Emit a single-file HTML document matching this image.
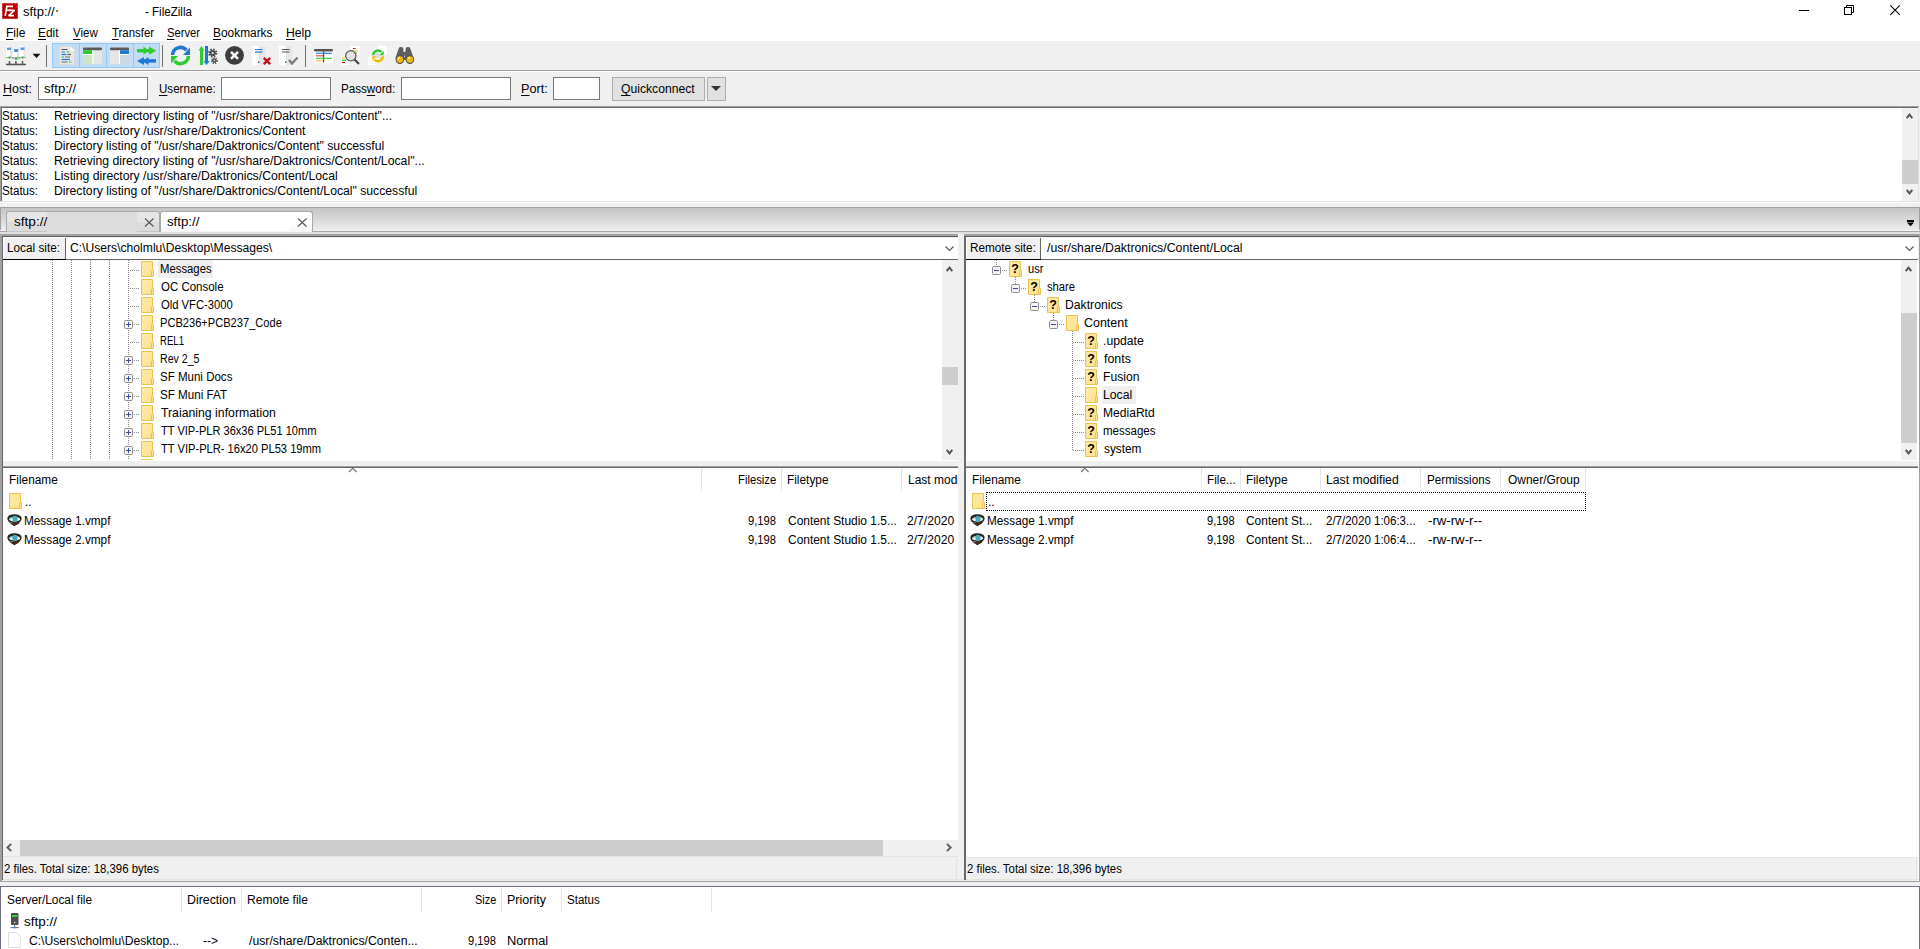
<!DOCTYPE html><html><head><meta charset="utf-8"><style>
*{margin:0;padding:0;box-sizing:border-box}
html,body{width:1920px;height:949px;overflow:hidden;background:#f0f0f0}
body{position:relative;font-family:"Liberation Sans",sans-serif;font-size:12px;color:#000}
.t{position:absolute;white-space:nowrap;line-height:15px;height:15px}
.u{text-decoration:underline;text-underline-offset:2px}
</style></head><body><div style="position:absolute;left:0px;top:0px;width:1920px;height:41px;background:#fff"></div>
<svg style="position:absolute;left:2px;top:3px" width="16" height="16" viewBox="0 0 16 16"><defs><linearGradient id="fzg" x1="0" y1="0" x2="0" y2="1"><stop offset="0" stop-color="#c80000"/><stop offset="1" stop-color="#a80000"/></linearGradient></defs><rect x="0.5" y="0.5" width="15" height="15" fill="url(#fzg)"/><rect x="0.5" y="0.5" width="15" height="15" fill="none" stroke="#b00000" stroke-width="1" stroke-dasharray="0.8 0.7"/><path d="M3.2 12.8L4.9 3.3H11" fill="none" stroke="#fff" stroke-width="1.7"/><path d="M4.2 7.2H8.5" stroke="#fff" stroke-width="1.5"/><path d="M7 7.4H12.6L6.6 12.6H12" fill="none" stroke="#fff" stroke-width="1.6" stroke-linejoin="bevel"/></svg>
<div class="t" style="left:23.10px;top:5px;transform:scaleX(1.0793);transform-origin:0 0;">sftp://</div>
<div style="position:absolute;left:56px;top:10px;width:1.5px;height:1.5px;background:#7a4a20;border-radius:1px"></div>
<div class="t" style="left:144.50px;top:5px;transform:scaleX(0.9633);transform-origin:0 0;">- FileZilla</div>
<div style="position:absolute;left:1799px;top:10px;width:10px;height:1px;background:#000"></div>
<svg style="position:absolute;left:1843px;top:4px" width="13" height="13" viewBox="0 0 13 13"><rect x="1.5" y="3.5" width="7" height="7" fill="none" stroke="#000"/><path d="M3.5 3.5V1.5H10.5V8.5H8.5" fill="none" stroke="#000"/></svg>
<svg style="position:absolute;left:1889px;top:4px" width="13" height="13" viewBox="0 0 13 13"><path d="M1.3 1.3L10.8 10.8M10.8 1.3L1.3 10.8" stroke="#000" stroke-width="1.1"/></svg>
<div class="t" style="left:6.00px;top:26px;transform:scaleX(1.0000);transform-origin:0 0;"><span class="u">F</span>ile</div>
<div class="t" style="left:38.21px;top:26px;transform:scaleX(0.9900);transform-origin:0 0;"><span class="u">E</span>dit</div>
<div class="t" style="left:73.10px;top:26px;transform:scaleX(0.9577);transform-origin:0 0;"><span class="u">V</span>iew</div>
<div class="t" style="left:112.00px;top:26px;transform:scaleX(0.9523);transform-origin:0 0;"><span class="u">T</span>ransfer</div>
<div class="t" style="left:167.26px;top:26px;transform:scaleX(0.9353);transform-origin:0 0;"><span class="u">S</span>erver</div>
<div class="t" style="left:213.01px;top:26px;transform:scaleX(0.9915);transform-origin:0 0;"><span class="u">B</span>ookmarks</div>
<div class="t" style="left:286.38px;top:26px;transform:scaleX(1.0174);transform-origin:0 0;"><span class="u">H</span>elp</div>
<div style="position:absolute;left:0px;top:70px;width:1920px;height:1px;background:#a0a0a0"></div>
<div style="position:absolute;left:0px;top:71px;width:1920px;height:1px;background:#fff"></div>
<div class="t" style="left:3.37px;top:82px;transform:scaleX(1.0346);transform-origin:0 0;"><span class="u">H</span>ost:</div>
<div style="position:absolute;left:38px;top:77px;width:110px;height:23px;background:#fff;border:1px solid #7a7a7a"></div>
<div class="t" style="left:44.40px;top:82px;transform:scaleX(1.0966);transform-origin:0 0;">sftp://</div>
<div class="t" style="left:158.54px;top:82px;transform:scaleX(0.9649);transform-origin:0 0;"><span class="u">U</span>sername:</div>
<div style="position:absolute;left:221px;top:77px;width:110px;height:23px;background:#fff;border:1px solid #7a7a7a"></div>
<div class="t" style="left:341.43px;top:82px;transform:scaleX(0.9685);transform-origin:0 0;">Pass<span class="u">w</span>ord:</div>
<div style="position:absolute;left:401px;top:77px;width:110px;height:23px;background:#fff;border:1px solid #7a7a7a"></div>
<div class="t" style="left:521.24px;top:82px;transform:scaleX(1.0565);transform-origin:0 0;"><span class="u">P</span>ort:</div>
<div style="position:absolute;left:553px;top:77px;width:47px;height:23px;background:#fff;border:1px solid #7a7a7a"></div>
<div style="position:absolute;left:612px;top:77px;width:93px;height:24px;background:#e1e1e1;border:1px solid #adadad"></div>
<div class="t" style="left:621.00px;top:82px;transform:scaleX(1.0137);transform-origin:0 0;"><span class="u">Q</span>uickconnect</div>
<div style="position:absolute;left:707px;top:77px;width:19px;height:24px;background:#e1e1e1;border:1px solid #adadad"></div>
<svg style="position:absolute;left:711px;top:86px" width="10" height="6" viewBox="0 0 10 6"><path d="M0 0H10L5 5Z" fill="#333"/></svg>
<div style="position:absolute;left:0px;top:106px;width:1920px;height:95px;background:#fff;border-top:1px solid #a0a0a0;border-left:1px solid #a0a0a0"></div>
<div style="position:absolute;left:1px;top:201px;width:1918px;height:1px;background:#e3e3e3"></div>
<div style="position:absolute;left:0px;top:202px;width:1920px;height:1px;background:#fff"></div>
<div style="position:absolute;left:1px;top:107px;width:1918px;height:1px;background:#696969"></div>
<div style="position:absolute;left:1px;top:107px;width:1px;height:94px;background:#696969"></div>
<div class="t" style="left:2.33px;top:109px;transform:scaleX(0.9657);transform-origin:0 0;">Status:</div>
<div class="t" style="left:53.68px;top:109px;transform:scaleX(1.0207);transform-origin:0 0;">Retrieving directory listing of &quot;/usr/share/Daktronics/Content&quot;...</div>
<div class="t" style="left:2.33px;top:124px;transform:scaleX(0.9657);transform-origin:0 0;">Status:</div>
<div class="t" style="left:53.68px;top:124px;transform:scaleX(1.0216);transform-origin:0 0;">Listing directory /usr/share/Daktronics/Content</div>
<div class="t" style="left:2.33px;top:139px;transform:scaleX(0.9657);transform-origin:0 0;">Status:</div>
<div class="t" style="left:53.69px;top:139px;transform:scaleX(1.0148);transform-origin:0 0;">Directory listing of &quot;/usr/share/Daktronics/Content&quot; successful</div>
<div class="t" style="left:2.33px;top:154px;transform:scaleX(0.9657);transform-origin:0 0;">Status:</div>
<div class="t" style="left:53.68px;top:154px;transform:scaleX(1.0202);transform-origin:0 0;">Retrieving directory listing of &quot;/usr/share/Daktronics/Content/Local&quot;...</div>
<div class="t" style="left:2.33px;top:169px;transform:scaleX(0.9657);transform-origin:0 0;">Status:</div>
<div class="t" style="left:53.68px;top:169px;transform:scaleX(1.0199);transform-origin:0 0;">Listing directory /usr/share/Daktronics/Content/Local</div>
<div class="t" style="left:2.33px;top:184px;transform:scaleX(0.9657);transform-origin:0 0;">Status:</div>
<div class="t" style="left:53.68px;top:184px;transform:scaleX(1.0163);transform-origin:0 0;">Directory listing of &quot;/usr/share/Daktronics/Content/Local&quot; successful</div>
<div style="position:absolute;left:1902px;top:108px;width:16px;height:93px;background:#f0f0f0"></div>
<div style="position:absolute;left:1902px;top:160px;width:16px;height:24px;background:#cdcdcd"></div>
<svg style="position:absolute;left:1905px;top:112px" width="9" height="8" viewBox="0 0 9 8"><path d="M1.7 6.2L4.5 2.6L7.3 6.2" fill="none" stroke="#555" stroke-width="2"/></svg>
<svg style="position:absolute;left:1905px;top:188px" width="9" height="8" viewBox="0 0 9 8"><path d="M1.7 1.8L4.5 5.4L7.3 1.8" fill="none" stroke="#555" stroke-width="2"/></svg>
<div style="position:absolute;left:1918px;top:107px;width:1px;height:94px;background:#e3e3e3"></div>
<div style="position:absolute;left:1919px;top:106px;width:1px;height:97px;background:#f0f0f0"></div>
<div style="position:absolute;left:0px;top:207px;width:1920px;height:23px;background:linear-gradient(#c4c4c4,#ececec);border-top:1px solid #a0a0a0;border-left:1px solid #a0a0a0;border-right:1px solid #a0a0a0"></div>
<div style="position:absolute;left:0px;top:230px;width:1920px;height:1px;background:#f4f4f4"></div>
<div style="position:absolute;left:0px;top:231px;width:1920px;height:1px;background:#a4a4a4"></div>
<div style="position:absolute;left:6px;top:211px;width:154px;height:20px;background:linear-gradient(#e6e6e6 0,#e6e6e6 50%,#dcdcdc 50%,#dcdcdc);border:1px solid #a8a8a8;border-bottom:none;border-radius:3px 3px 0 0"></div>
<div style="position:absolute;left:7px;top:231px;width:152px;height:1px;background:#c4c4c4"></div>
<div style="position:absolute;left:47px;top:212px;width:90px;height:20px;background:#dcdcdc"></div>
<div class="t" style="left:14.00px;top:215px;transform:scaleX(1.1345);transform-origin:0 0;">sftp://</div>
<svg style="position:absolute;left:144px;top:218px" width="11" height="9" viewBox="0 0 11 9"><path d="M1 0.5L9.5 8.5M9.5 0.5L1 8.5" stroke="#555" stroke-width="1.1"/></svg>
<div style="position:absolute;left:160px;top:211px;width:153px;height:22px;background:linear-gradient(#fff 55%,#f2f2f2);border:1px solid #a8a8a8;border-bottom:none;border-radius:3px 3px 0 0"></div>
<div style="position:absolute;left:199px;top:212px;width:90px;height:19px;background:#fff"></div>
<div class="t" style="left:167.00px;top:215px;transform:scaleX(1.1034);transform-origin:0 0;">sftp://</div>
<svg style="position:absolute;left:297px;top:218px" width="11" height="9" viewBox="0 0 11 9"><path d="M1 0.5L9.5 8.5M9.5 0.5L1 8.5" stroke="#555" stroke-width="1.1"/></svg>
<div style="position:absolute;left:1907px;top:220px;width:7px;height:1.6px;background:#000"></div>
<svg style="position:absolute;left:1907px;top:222px" width="7" height="5" viewBox="0 0 7 5"><path d="M0 0.5H7L3.5 4.3Z" fill="#000"/></svg>
<div style="position:absolute;left:0px;top:232px;width:1920px;height:2px;background:#e0e0e0"></div>
<div style="position:absolute;left:0px;top:234px;width:958px;height:2px;background:#a2a2a2"></div>
<div style="position:absolute;left:1px;top:236px;width:957px;height:1px;background:#5c5c5c"></div>
<div style="position:absolute;left:958px;top:234px;width:6px;height:3px;background:#f0f0f0"></div>
<div style="position:absolute;left:964px;top:234px;width:956px;height:2px;background:#a2a2a2"></div>
<div style="position:absolute;left:964px;top:236px;width:955px;height:1px;background:#5c5c5c"></div>
<div style="position:absolute;left:3px;top:237px;width:63px;height:22px;background:#f0f0f0;border-top:1px solid #fff;border-left:1px solid #fff"></div>
<div style="position:absolute;left:65px;top:238px;width:1px;height:21px;background:#646464"></div>
<div class="t" style="left:7.32px;top:241px;transform:scaleX(0.9827);transform-origin:0 0;">Local site:</div>
<div style="position:absolute;left:66px;top:238px;width:892px;height:21px;background:#fff"></div>
<div class="t" style="left:70.39px;top:241px;transform:scaleX(1.0106);transform-origin:0 0;">C:\Users\cholmlu\Desktop\Messages\</div>
<svg style="position:absolute;left:945px;top:246px" width="9" height="5" viewBox="0 0 9 5"><path d="M0.5 0.5L4.5 4.5L8.5 0.5" fill="none" stroke="#555" stroke-width="1.1"/></svg>
<div style="position:absolute;left:3px;top:259px;width:63px;height:1px;background:#000"></div>
<div style="position:absolute;left:66px;top:259px;width:892px;height:1px;background:#646464"></div>
<div style="position:absolute;left:966px;top:237px;width:75px;height:22px;background:#f0f0f0;border-top:1px solid #fff;border-left:1px solid #fff"></div>
<div style="position:absolute;left:1040px;top:238px;width:1px;height:21px;background:#646464"></div>
<div class="t" style="left:970.42px;top:241px;transform:scaleX(0.9785);transform-origin:0 0;">Remote site:</div>
<div style="position:absolute;left:1041px;top:238px;width:877px;height:21px;background:#fff"></div>
<div class="t" style="left:1047.40px;top:241px;transform:scaleX(1.0253);transform-origin:0 0;">/usr/share/Daktronics/Content/Local</div>
<svg style="position:absolute;left:1905px;top:246px" width="9" height="5" viewBox="0 0 9 5"><path d="M0.5 0.5L4.5 4.5L8.5 0.5" fill="none" stroke="#555" stroke-width="1.1"/></svg>
<div style="position:absolute;left:966px;top:259px;width:75px;height:1px;background:#000"></div>
<div style="position:absolute;left:1041px;top:259px;width:877px;height:1px;background:#646464"></div>
<div style="position:absolute;left:958px;top:237px;width:6px;height:643px;background:#f0f0f0"></div>
<div style="position:absolute;left:1917px;top:260px;width:2px;height:621px;background:#fff"></div>
<div style="position:absolute;left:3px;top:260px;width:955px;height:200px;background:#fff"></div>
<div style="position:absolute;left:52px;top:260px;width:1px;height:200px;background:repeating-linear-gradient(#888 0 1px,transparent 1px 2px)"></div>
<div style="position:absolute;left:71px;top:260px;width:1px;height:200px;background:repeating-linear-gradient(#888 0 1px,transparent 1px 2px)"></div>
<div style="position:absolute;left:90px;top:260px;width:1px;height:200px;background:repeating-linear-gradient(#888 0 1px,transparent 1px 2px)"></div>
<div style="position:absolute;left:109px;top:260px;width:1px;height:200px;background:repeating-linear-gradient(#888 0 1px,transparent 1px 2px)"></div>
<div style="position:absolute;left:128px;top:260px;width:1px;height:200px;background:repeating-linear-gradient(#888 0 1px,transparent 1px 2px)"></div>
<div style="position:absolute;left:130px;top:270px;width:10px;height:1px;background:repeating-linear-gradient(90deg,#888 0 1px,transparent 1px 2px)"></div>
<svg style="position:absolute;left:141px;top:261px" width="13" height="16" viewBox="0 0 13 16"><defs><linearGradient id="fg" x1="0" y1="0" x2="1" y2="1"><stop offset="0" stop-color="#ffeba8"/><stop offset="1" stop-color="#fde08a"/></linearGradient></defs><path d="M0.5 0.5H11.5V9.5H12.5V15.5H0.5Z" fill="url(#fg)" stroke="#e9c24f"/><path d="M10.5 9.8V15.5" stroke="#e9c24f"/></svg>
<div style="position:absolute;left:158px;top:260px;width:55px;height:18px;background:#efefef"></div>
<div class="t" style="left:159.56px;top:262px;transform:scaleX(0.9434);transform-origin:0 0;">Messages</div>
<div style="position:absolute;left:130px;top:288px;width:10px;height:1px;background:repeating-linear-gradient(90deg,#888 0 1px,transparent 1px 2px)"></div>
<svg style="position:absolute;left:141px;top:279px" width="13" height="16" viewBox="0 0 13 16"><defs><linearGradient id="fg" x1="0" y1="0" x2="1" y2="1"><stop offset="0" stop-color="#ffeba8"/><stop offset="1" stop-color="#fde08a"/></linearGradient></defs><path d="M0.5 0.5H11.5V9.5H12.5V15.5H0.5Z" fill="url(#fg)" stroke="#e9c24f"/><path d="M10.5 9.8V15.5" stroke="#e9c24f"/></svg>
<div class="t" style="left:160.50px;top:280px;transform:scaleX(0.9569);transform-origin:0 0;">OC Console</div>
<div style="position:absolute;left:130px;top:306px;width:10px;height:1px;background:repeating-linear-gradient(90deg,#888 0 1px,transparent 1px 2px)"></div>
<svg style="position:absolute;left:141px;top:297px" width="13" height="16" viewBox="0 0 13 16"><defs><linearGradient id="fg" x1="0" y1="0" x2="1" y2="1"><stop offset="0" stop-color="#ffeba8"/><stop offset="1" stop-color="#fde08a"/></linearGradient></defs><path d="M0.5 0.5H11.5V9.5H12.5V15.5H0.5Z" fill="url(#fg)" stroke="#e9c24f"/><path d="M10.5 9.8V15.5" stroke="#e9c24f"/></svg>
<div class="t" style="left:160.50px;top:298px;transform:scaleX(0.9355);transform-origin:0 0;">Old VFC-3000</div>
<div style="position:absolute;left:130px;top:324px;width:10px;height:1px;background:repeating-linear-gradient(90deg,#888 0 1px,transparent 1px 2px)"></div>
<svg style="position:absolute;left:124px;top:320px" width="9" height="9" viewBox="0 0 9 9"><rect x="0.5" y="0.5" width="8" height="8" rx="1" fill="#f4f4f4" stroke="#8f8f8f"/><path d="M2 4.5H7" stroke="#3b4d9a" stroke-width="1"/><path d="M4.5 2V7" stroke="#3b4d9a" stroke-width="1"/></svg>
<svg style="position:absolute;left:141px;top:315px" width="13" height="16" viewBox="0 0 13 16"><defs><linearGradient id="fg" x1="0" y1="0" x2="1" y2="1"><stop offset="0" stop-color="#ffeba8"/><stop offset="1" stop-color="#fde08a"/></linearGradient></defs><path d="M0.5 0.5H11.5V9.5H12.5V15.5H0.5Z" fill="url(#fg)" stroke="#e9c24f"/><path d="M10.5 9.8V15.5" stroke="#e9c24f"/></svg>
<div class="t" style="left:159.58px;top:316px;transform:scaleX(0.9246);transform-origin:0 0;">PCB236+PCB237_Code</div>
<div style="position:absolute;left:130px;top:342px;width:10px;height:1px;background:repeating-linear-gradient(90deg,#888 0 1px,transparent 1px 2px)"></div>
<svg style="position:absolute;left:141px;top:333px" width="13" height="16" viewBox="0 0 13 16"><defs><linearGradient id="fg" x1="0" y1="0" x2="1" y2="1"><stop offset="0" stop-color="#ffeba8"/><stop offset="1" stop-color="#fde08a"/></linearGradient></defs><path d="M0.5 0.5H11.5V9.5H12.5V15.5H0.5Z" fill="url(#fg)" stroke="#e9c24f"/><path d="M10.5 9.8V15.5" stroke="#e9c24f"/></svg>
<div class="t" style="left:159.70px;top:334px;transform:scaleX(0.8000);transform-origin:0 0;">REL1</div>
<div style="position:absolute;left:130px;top:360px;width:10px;height:1px;background:repeating-linear-gradient(90deg,#888 0 1px,transparent 1px 2px)"></div>
<svg style="position:absolute;left:124px;top:356px" width="9" height="9" viewBox="0 0 9 9"><rect x="0.5" y="0.5" width="8" height="8" rx="1" fill="#f4f4f4" stroke="#8f8f8f"/><path d="M2 4.5H7" stroke="#3b4d9a" stroke-width="1"/><path d="M4.5 2V7" stroke="#3b4d9a" stroke-width="1"/></svg>
<svg style="position:absolute;left:141px;top:351px" width="13" height="16" viewBox="0 0 13 16"><defs><linearGradient id="fg" x1="0" y1="0" x2="1" y2="1"><stop offset="0" stop-color="#ffeba8"/><stop offset="1" stop-color="#fde08a"/></linearGradient></defs><path d="M0.5 0.5H11.5V9.5H12.5V15.5H0.5Z" fill="url(#fg)" stroke="#e9c24f"/><path d="M10.5 9.8V15.5" stroke="#e9c24f"/></svg>
<div class="t" style="left:159.62px;top:352px;transform:scaleX(0.8837);transform-origin:0 0;">Rev 2_5</div>
<div style="position:absolute;left:130px;top:378px;width:10px;height:1px;background:repeating-linear-gradient(90deg,#888 0 1px,transparent 1px 2px)"></div>
<svg style="position:absolute;left:124px;top:374px" width="9" height="9" viewBox="0 0 9 9"><rect x="0.5" y="0.5" width="8" height="8" rx="1" fill="#f4f4f4" stroke="#8f8f8f"/><path d="M2 4.5H7" stroke="#3b4d9a" stroke-width="1"/><path d="M4.5 2V7" stroke="#3b4d9a" stroke-width="1"/></svg>
<svg style="position:absolute;left:141px;top:369px" width="13" height="16" viewBox="0 0 13 16"><defs><linearGradient id="fg" x1="0" y1="0" x2="1" y2="1"><stop offset="0" stop-color="#ffeba8"/><stop offset="1" stop-color="#fde08a"/></linearGradient></defs><path d="M0.5 0.5H11.5V9.5H12.5V15.5H0.5Z" fill="url(#fg)" stroke="#e9c24f"/><path d="M10.5 9.8V15.5" stroke="#e9c24f"/></svg>
<div class="t" style="left:159.54px;top:370px;transform:scaleX(0.9608);transform-origin:0 0;">SF Muni Docs</div>
<div style="position:absolute;left:130px;top:396px;width:10px;height:1px;background:repeating-linear-gradient(90deg,#888 0 1px,transparent 1px 2px)"></div>
<svg style="position:absolute;left:124px;top:392px" width="9" height="9" viewBox="0 0 9 9"><rect x="0.5" y="0.5" width="8" height="8" rx="1" fill="#f4f4f4" stroke="#8f8f8f"/><path d="M2 4.5H7" stroke="#3b4d9a" stroke-width="1"/><path d="M4.5 2V7" stroke="#3b4d9a" stroke-width="1"/></svg>
<svg style="position:absolute;left:141px;top:387px" width="13" height="16" viewBox="0 0 13 16"><defs><linearGradient id="fg" x1="0" y1="0" x2="1" y2="1"><stop offset="0" stop-color="#ffeba8"/><stop offset="1" stop-color="#fde08a"/></linearGradient></defs><path d="M0.5 0.5H11.5V9.5H12.5V15.5H0.5Z" fill="url(#fg)" stroke="#e9c24f"/><path d="M10.5 9.8V15.5" stroke="#e9c24f"/></svg>
<div class="t" style="left:159.53px;top:388px;transform:scaleX(0.9706);transform-origin:0 0;">SF Muni FAT</div>
<div style="position:absolute;left:130px;top:414px;width:10px;height:1px;background:repeating-linear-gradient(90deg,#888 0 1px,transparent 1px 2px)"></div>
<svg style="position:absolute;left:124px;top:410px" width="9" height="9" viewBox="0 0 9 9"><rect x="0.5" y="0.5" width="8" height="8" rx="1" fill="#f4f4f4" stroke="#8f8f8f"/><path d="M2 4.5H7" stroke="#3b4d9a" stroke-width="1"/><path d="M4.5 2V7" stroke="#3b4d9a" stroke-width="1"/></svg>
<svg style="position:absolute;left:141px;top:405px" width="13" height="16" viewBox="0 0 13 16"><defs><linearGradient id="fg" x1="0" y1="0" x2="1" y2="1"><stop offset="0" stop-color="#ffeba8"/><stop offset="1" stop-color="#fde08a"/></linearGradient></defs><path d="M0.5 0.5H11.5V9.5H12.5V15.5H0.5Z" fill="url(#fg)" stroke="#e9c24f"/><path d="M10.5 9.8V15.5" stroke="#e9c24f"/></svg>
<div class="t" style="left:160.50px;top:406px;transform:scaleX(1.0223);transform-origin:0 0;">Traianing information</div>
<div style="position:absolute;left:130px;top:432px;width:10px;height:1px;background:repeating-linear-gradient(90deg,#888 0 1px,transparent 1px 2px)"></div>
<svg style="position:absolute;left:124px;top:428px" width="9" height="9" viewBox="0 0 9 9"><rect x="0.5" y="0.5" width="8" height="8" rx="1" fill="#f4f4f4" stroke="#8f8f8f"/><path d="M2 4.5H7" stroke="#3b4d9a" stroke-width="1"/><path d="M4.5 2V7" stroke="#3b4d9a" stroke-width="1"/></svg>
<svg style="position:absolute;left:141px;top:423px" width="13" height="16" viewBox="0 0 13 16"><defs><linearGradient id="fg" x1="0" y1="0" x2="1" y2="1"><stop offset="0" stop-color="#ffeba8"/><stop offset="1" stop-color="#fde08a"/></linearGradient></defs><path d="M0.5 0.5H11.5V9.5H12.5V15.5H0.5Z" fill="url(#fg)" stroke="#e9c24f"/><path d="M10.5 9.8V15.5" stroke="#e9c24f"/></svg>
<div class="t" style="left:160.50px;top:424px;transform:scaleX(0.9220);transform-origin:0 0;">TT VIP-PLR 36x36 PL51 10mm</div>
<div style="position:absolute;left:130px;top:450px;width:10px;height:1px;background:repeating-linear-gradient(90deg,#888 0 1px,transparent 1px 2px)"></div>
<svg style="position:absolute;left:124px;top:446px" width="9" height="9" viewBox="0 0 9 9"><rect x="0.5" y="0.5" width="8" height="8" rx="1" fill="#f4f4f4" stroke="#8f8f8f"/><path d="M2 4.5H7" stroke="#3b4d9a" stroke-width="1"/><path d="M4.5 2V7" stroke="#3b4d9a" stroke-width="1"/></svg>
<svg style="position:absolute;left:141px;top:441px" width="13" height="16" viewBox="0 0 13 16"><defs><linearGradient id="fg" x1="0" y1="0" x2="1" y2="1"><stop offset="0" stop-color="#ffeba8"/><stop offset="1" stop-color="#fde08a"/></linearGradient></defs><path d="M0.5 0.5H11.5V9.5H12.5V15.5H0.5Z" fill="url(#fg)" stroke="#e9c24f"/><path d="M10.5 9.8V15.5" stroke="#e9c24f"/></svg>
<div class="t" style="left:160.50px;top:442px;transform:scaleX(0.9279);transform-origin:0 0;">TT VIP-PLR- 16x20 PL53 19mm</div>
<div style="position:absolute;left:130px;top:468px;width:10px;height:1px;background:repeating-linear-gradient(90deg,#888 0 1px,transparent 1px 2px)"></div>
<svg style="position:absolute;left:124px;top:464px" width="9" height="9" viewBox="0 0 9 9"><rect x="0.5" y="0.5" width="8" height="8" rx="1" fill="#f4f4f4" stroke="#8f8f8f"/><path d="M2 4.5H7" stroke="#3b4d9a" stroke-width="1"/><path d="M4.5 2V7" stroke="#3b4d9a" stroke-width="1"/></svg>
<svg style="position:absolute;left:141px;top:459px" width="13" height="16" viewBox="0 0 13 16"><defs><linearGradient id="fg" x1="0" y1="0" x2="1" y2="1"><stop offset="0" stop-color="#ffeba8"/><stop offset="1" stop-color="#fde08a"/></linearGradient></defs><path d="M0.5 0.5H11.5V9.5H12.5V15.5H0.5Z" fill="url(#fg)" stroke="#e9c24f"/><path d="M10.5 9.8V15.5" stroke="#e9c24f"/></svg>
<div style="position:absolute;left:942px;top:260px;width:16px;height:200px;background:#f0f0f0"></div>
<div style="position:absolute;left:942px;top:367px;width:16px;height:18px;background:#cdcdcd"></div>
<svg style="position:absolute;left:945px;top:265px" width="9" height="8" viewBox="0 0 9 8"><path d="M1.7 6.2L4.5 2.6L7.3 6.2" fill="none" stroke="#555" stroke-width="2"/></svg>
<svg style="position:absolute;left:945px;top:448px" width="9" height="8" viewBox="0 0 9 8"><path d="M1.7 1.8L4.5 5.4L7.3 1.8" fill="none" stroke="#555" stroke-width="2"/></svg>
<div style="position:absolute;left:965px;top:260px;width:953px;height:200px;background:#fff"></div>
<div style="position:absolute;left:1002px;top:270px;width:6px;height:1px;background:repeating-linear-gradient(90deg,#888 0 1px,transparent 1px 2px)"></div>
<div style="position:absolute;left:996px;top:260px;width:1px;height:6px;background:repeating-linear-gradient(#888 0 1px,transparent 1px 2px)"></div>
<svg style="position:absolute;left:992px;top:266px" width="9" height="9" viewBox="0 0 9 9"><rect x="0.5" y="0.5" width="8" height="8" rx="1" fill="#f4f4f4" stroke="#8f8f8f"/><path d="M2 4.5H7" stroke="#3b4d9a" stroke-width="1"/></svg>
<svg style="position:absolute;left:1009px;top:261px" width="13" height="16" viewBox="0 0 13 16"><defs><linearGradient id="fg" x1="0" y1="0" x2="1" y2="1"><stop offset="0" stop-color="#ffeba8"/><stop offset="1" stop-color="#fde08a"/></linearGradient></defs><path d="M0.5 0.5H11.5V9.5H12.5V15.5H0.5Z" fill="url(#fg)" stroke="#e9c24f"/><path d="M10.5 9.8V15.5" stroke="#e9c24f"/><text x="6" y="11.6" text-anchor="middle" font-family="Liberation Sans" font-weight="bold" font-size="12.5" fill="#000">?</text></svg>
<div class="t" style="left:1027.98px;top:262px;transform:scaleX(0.9250);transform-origin:0 0;">usr</div>
<div style="position:absolute;left:1021px;top:288px;width:6px;height:1px;background:repeating-linear-gradient(90deg,#888 0 1px,transparent 1px 2px)"></div>
<div style="position:absolute;left:1015px;top:277px;width:1px;height:7px;background:repeating-linear-gradient(#888 0 1px,transparent 1px 2px)"></div>
<svg style="position:absolute;left:1011px;top:284px" width="9" height="9" viewBox="0 0 9 9"><rect x="0.5" y="0.5" width="8" height="8" rx="1" fill="#f4f4f4" stroke="#8f8f8f"/><path d="M2 4.5H7" stroke="#3b4d9a" stroke-width="1"/></svg>
<svg style="position:absolute;left:1028px;top:279px" width="13" height="16" viewBox="0 0 13 16"><defs><linearGradient id="fg" x1="0" y1="0" x2="1" y2="1"><stop offset="0" stop-color="#ffeba8"/><stop offset="1" stop-color="#fde08a"/></linearGradient></defs><path d="M0.5 0.5H11.5V9.5H12.5V15.5H0.5Z" fill="url(#fg)" stroke="#e9c24f"/><path d="M10.5 9.8V15.5" stroke="#e9c24f"/><text x="6" y="11.6" text-anchor="middle" font-family="Liberation Sans" font-weight="bold" font-size="12.5" fill="#000">?</text></svg>
<div class="t" style="left:1047.00px;top:280px;transform:scaleX(0.9367);transform-origin:0 0;">share</div>
<div style="position:absolute;left:1040px;top:306px;width:6px;height:1px;background:repeating-linear-gradient(90deg,#888 0 1px,transparent 1px 2px)"></div>
<div style="position:absolute;left:1034px;top:295px;width:1px;height:7px;background:repeating-linear-gradient(#888 0 1px,transparent 1px 2px)"></div>
<svg style="position:absolute;left:1030px;top:302px" width="9" height="9" viewBox="0 0 9 9"><rect x="0.5" y="0.5" width="8" height="8" rx="1" fill="#f4f4f4" stroke="#8f8f8f"/><path d="M2 4.5H7" stroke="#3b4d9a" stroke-width="1"/></svg>
<svg style="position:absolute;left:1047px;top:297px" width="13" height="16" viewBox="0 0 13 16"><defs><linearGradient id="fg" x1="0" y1="0" x2="1" y2="1"><stop offset="0" stop-color="#ffeba8"/><stop offset="1" stop-color="#fde08a"/></linearGradient></defs><path d="M0.5 0.5H11.5V9.5H12.5V15.5H0.5Z" fill="url(#fg)" stroke="#e9c24f"/><path d="M10.5 9.8V15.5" stroke="#e9c24f"/><text x="6" y="11.6" text-anchor="middle" font-family="Liberation Sans" font-weight="bold" font-size="12.5" fill="#000">?</text></svg>
<div class="t" style="left:1064.98px;top:298px;transform:scaleX(1.0182);transform-origin:0 0;">Daktronics</div>
<div style="position:absolute;left:1059px;top:324px;width:6px;height:1px;background:repeating-linear-gradient(90deg,#888 0 1px,transparent 1px 2px)"></div>
<div style="position:absolute;left:1053px;top:313px;width:1px;height:7px;background:repeating-linear-gradient(#888 0 1px,transparent 1px 2px)"></div>
<svg style="position:absolute;left:1049px;top:320px" width="9" height="9" viewBox="0 0 9 9"><rect x="0.5" y="0.5" width="8" height="8" rx="1" fill="#f4f4f4" stroke="#8f8f8f"/><path d="M2 4.5H7" stroke="#3b4d9a" stroke-width="1"/></svg>
<svg style="position:absolute;left:1066px;top:315px" width="13" height="16" viewBox="0 0 13 16"><defs><linearGradient id="fg" x1="0" y1="0" x2="1" y2="1"><stop offset="0" stop-color="#ffeba8"/><stop offset="1" stop-color="#fde08a"/></linearGradient></defs><path d="M0.5 0.5H11.5V9.5H12.5V15.5H0.5Z" fill="url(#fg)" stroke="#e9c24f"/><path d="M10.5 9.8V15.5" stroke="#e9c24f"/></svg>
<div class="t" style="left:1083.96px;top:316px;transform:scaleX(1.0390);transform-origin:0 0;">Content</div>
<div style="position:absolute;left:1073px;top:342px;width:11px;height:1px;background:repeating-linear-gradient(90deg,#888 0 1px,transparent 1px 2px)"></div>
<svg style="position:absolute;left:1085px;top:333px" width="13" height="16" viewBox="0 0 13 16"><defs><linearGradient id="fg" x1="0" y1="0" x2="1" y2="1"><stop offset="0" stop-color="#ffeba8"/><stop offset="1" stop-color="#fde08a"/></linearGradient></defs><path d="M0.5 0.5H11.5V9.5H12.5V15.5H0.5Z" fill="url(#fg)" stroke="#e9c24f"/><path d="M10.5 9.8V15.5" stroke="#e9c24f"/><text x="6" y="11.6" text-anchor="middle" font-family="Liberation Sans" font-weight="bold" font-size="12.5" fill="#000">?</text></svg>
<div class="t" style="left:1102.98px;top:334px;transform:scaleX(1.0179);transform-origin:0 0;">.update</div>
<div style="position:absolute;left:1073px;top:360px;width:11px;height:1px;background:repeating-linear-gradient(90deg,#888 0 1px,transparent 1px 2px)"></div>
<svg style="position:absolute;left:1085px;top:351px" width="13" height="16" viewBox="0 0 13 16"><defs><linearGradient id="fg" x1="0" y1="0" x2="1" y2="1"><stop offset="0" stop-color="#ffeba8"/><stop offset="1" stop-color="#fde08a"/></linearGradient></defs><path d="M0.5 0.5H11.5V9.5H12.5V15.5H0.5Z" fill="url(#fg)" stroke="#e9c24f"/><path d="M10.5 9.8V15.5" stroke="#e9c24f"/><text x="6" y="11.6" text-anchor="middle" font-family="Liberation Sans" font-weight="bold" font-size="12.5" fill="#000">?</text></svg>
<div class="t" style="left:1104.00px;top:352px;transform:scaleX(1.0346);transform-origin:0 0;">fonts</div>
<div style="position:absolute;left:1073px;top:378px;width:11px;height:1px;background:repeating-linear-gradient(90deg,#888 0 1px,transparent 1px 2px)"></div>
<svg style="position:absolute;left:1085px;top:369px" width="13" height="16" viewBox="0 0 13 16"><defs><linearGradient id="fg" x1="0" y1="0" x2="1" y2="1"><stop offset="0" stop-color="#ffeba8"/><stop offset="1" stop-color="#fde08a"/></linearGradient></defs><path d="M0.5 0.5H11.5V9.5H12.5V15.5H0.5Z" fill="url(#fg)" stroke="#e9c24f"/><path d="M10.5 9.8V15.5" stroke="#e9c24f"/><text x="6" y="11.6" text-anchor="middle" font-family="Liberation Sans" font-weight="bold" font-size="12.5" fill="#000">?</text></svg>
<div class="t" style="left:1102.99px;top:370px;transform:scaleX(1.0118);transform-origin:0 0;">Fusion</div>
<div style="position:absolute;left:1073px;top:396px;width:11px;height:1px;background:repeating-linear-gradient(90deg,#888 0 1px,transparent 1px 2px)"></div>
<svg style="position:absolute;left:1085px;top:387px" width="13" height="16" viewBox="0 0 13 16"><defs><linearGradient id="fg" x1="0" y1="0" x2="1" y2="1"><stop offset="0" stop-color="#ffeba8"/><stop offset="1" stop-color="#fde08a"/></linearGradient></defs><path d="M0.5 0.5H11.5V9.5H12.5V15.5H0.5Z" fill="url(#fg)" stroke="#e9c24f"/><path d="M10.5 9.8V15.5" stroke="#e9c24f"/></svg>
<div style="position:absolute;left:1102px;top:386px;width:34px;height:18px;background:#efefef"></div>
<div class="t" style="left:1102.98px;top:388px;transform:scaleX(1.0185);transform-origin:0 0;">Local</div>
<div style="position:absolute;left:1073px;top:414px;width:11px;height:1px;background:repeating-linear-gradient(90deg,#888 0 1px,transparent 1px 2px)"></div>
<svg style="position:absolute;left:1085px;top:405px" width="13" height="16" viewBox="0 0 13 16"><defs><linearGradient id="fg" x1="0" y1="0" x2="1" y2="1"><stop offset="0" stop-color="#ffeba8"/><stop offset="1" stop-color="#fde08a"/></linearGradient></defs><path d="M0.5 0.5H11.5V9.5H12.5V15.5H0.5Z" fill="url(#fg)" stroke="#e9c24f"/><path d="M10.5 9.8V15.5" stroke="#e9c24f"/><text x="6" y="11.6" text-anchor="middle" font-family="Liberation Sans" font-weight="bold" font-size="12.5" fill="#000">?</text></svg>
<div class="t" style="left:1102.99px;top:406px;transform:scaleX(1.0060);transform-origin:0 0;">MediaRtd</div>
<div style="position:absolute;left:1073px;top:432px;width:11px;height:1px;background:repeating-linear-gradient(90deg,#888 0 1px,transparent 1px 2px)"></div>
<svg style="position:absolute;left:1085px;top:423px" width="13" height="16" viewBox="0 0 13 16"><defs><linearGradient id="fg" x1="0" y1="0" x2="1" y2="1"><stop offset="0" stop-color="#ffeba8"/><stop offset="1" stop-color="#fde08a"/></linearGradient></defs><path d="M0.5 0.5H11.5V9.5H12.5V15.5H0.5Z" fill="url(#fg)" stroke="#e9c24f"/><path d="M10.5 9.8V15.5" stroke="#e9c24f"/><text x="6" y="11.6" text-anchor="middle" font-family="Liberation Sans" font-weight="bold" font-size="12.5" fill="#000">?</text></svg>
<div class="t" style="left:1103.04px;top:424px;transform:scaleX(0.9585);transform-origin:0 0;">messages</div>
<div style="position:absolute;left:1073px;top:450px;width:11px;height:1px;background:repeating-linear-gradient(90deg,#888 0 1px,transparent 1px 2px)"></div>
<svg style="position:absolute;left:1085px;top:441px" width="13" height="16" viewBox="0 0 13 16"><defs><linearGradient id="fg" x1="0" y1="0" x2="1" y2="1"><stop offset="0" stop-color="#ffeba8"/><stop offset="1" stop-color="#fde08a"/></linearGradient></defs><path d="M0.5 0.5H11.5V9.5H12.5V15.5H0.5Z" fill="url(#fg)" stroke="#e9c24f"/><path d="M10.5 9.8V15.5" stroke="#e9c24f"/><text x="6" y="11.6" text-anchor="middle" font-family="Liberation Sans" font-weight="bold" font-size="12.5" fill="#000">?</text></svg>
<div class="t" style="left:1104.00px;top:442px;transform:scaleX(0.9838);transform-origin:0 0;">system</div>
<div style="position:absolute;left:1072px;top:331px;width:1px;height:120px;background:repeating-linear-gradient(#888 0 1px,transparent 1px 2px)"></div>
<div style="position:absolute;left:1901px;top:260px;width:16px;height:200px;background:#f0f0f0"></div>
<div style="position:absolute;left:1901px;top:313px;width:16px;height:130px;background:#cdcdcd"></div>
<svg style="position:absolute;left:1904px;top:265px" width="9" height="8" viewBox="0 0 9 8"><path d="M1.7 6.2L4.5 2.6L7.3 6.2" fill="none" stroke="#555" stroke-width="2"/></svg>
<svg style="position:absolute;left:1904px;top:448px" width="9" height="8" viewBox="0 0 9 8"><path d="M1.7 1.8L4.5 5.4L7.3 1.8" fill="none" stroke="#555" stroke-width="2"/></svg>
<div style="position:absolute;left:3px;top:460px;width:1915px;height:7px;background:#f0f0f0"></div>
<div style="position:absolute;left:3px;top:460px;width:955px;height:1px;background:#fff"></div>
<div style="position:absolute;left:965px;top:460px;width:953px;height:1px;background:#fff"></div>
<div style="position:absolute;left:3px;top:466px;width:955px;height:1px;background:#a0a0a0"></div>
<div style="position:absolute;left:965px;top:466px;width:953px;height:1px;background:#a0a0a0"></div>
<div style="position:absolute;left:3px;top:467px;width:955px;height:1px;background:#696969"></div>
<div style="position:absolute;left:965px;top:467px;width:953px;height:1px;background:#696969"></div>
<div style="position:absolute;left:3px;top:468px;width:955px;height:372px;background:#fff"></div>
<div style="position:absolute;left:965px;top:468px;width:953px;height:389px;background:#fff"></div>
<div class="t" style="left:8.51px;top:473px;transform:scaleX(0.9896);transform-origin:0 0;">Filename</div>
<svg style="position:absolute;left:348px;top:467px" width="10" height="6" viewBox="0 0 10 6"><path d="M1 5L4.8 1.2L8.6 5" fill="none" stroke="#6a6a6a" stroke-width="1.1"/></svg>
<div style="position:absolute;left:701px;top:468px;width:1px;height:23px;background:#e5e5e5"></div>
<div style="position:absolute;left:781px;top:468px;width:1px;height:23px;background:#e5e5e5"></div>
<div style="position:absolute;left:901px;top:468px;width:1px;height:23px;background:#e5e5e5"></div>
<div class="t" style="left:738.26px;top:473px;transform:scaleX(0.9385);transform-origin:0 0;">Filesize</div>
<div class="t" style="left:787.41px;top:473px;transform:scaleX(0.9878);transform-origin:0 0;">Filetype</div>
<div class="t" style="left:908px;top:473px;width:50px;overflow:hidden">Last modified</div>
<svg style="position:absolute;left:9px;top:493px" width="13" height="16" viewBox="0 0 13 16"><defs><linearGradient id="fg" x1="0" y1="0" x2="1" y2="1"><stop offset="0" stop-color="#ffeba8"/><stop offset="1" stop-color="#fde08a"/></linearGradient></defs><path d="M0.5 0.5H11.5V9.5H12.5V15.5H0.5Z" fill="url(#fg)" stroke="#e9c24f"/><path d="M10.5 9.8V15.5" stroke="#e9c24f"/></svg>
<div class="t " style="left:25px;top:495px;">..</div>
<svg style="position:absolute;left:7px;top:514px" width="15" height="13" viewBox="0 0 15 13"><path d="M0.4 4.6C0.4 1.6 4 0.3 7.3 0.3C10.6 0.3 14.6 1.6 14.6 4.6C14.6 7.6 10.2 11 7.4 12.3C4.6 11 0.4 7.6 0.4 4.6Z" fill="#262626"/><ellipse cx="7.6" cy="5.2" rx="5.4" ry="2.3" fill="#fff"/><ellipse cx="8" cy="5" rx="2.6" ry="3.3" fill="#4aaab5"/><path d="M3.3 5.4A1.4 1.4 0 0 1 5.6 4.2" stroke="#4aaab5" stroke-width="0.8" fill="none"/><ellipse cx="8" cy="9.3" rx="3.8" ry="1.3" fill="#4a2c14"/><rect x="2.6" y="8.2" width="0.9" height="0.9" fill="#ddd"/><rect x="4.4" y="8.2" width="0.9" height="0.9" fill="#ddd"/></svg>
<div class="t" style="left:24.02px;top:514px;transform:scaleX(0.9816);transform-origin:0 0;">Message 1.vmpf</div>
<div class="t" style="left:748.07px;top:514px;transform:scaleX(0.9310);transform-origin:0 0;">9,198</div>
<div class="t" style="left:787.50px;top:514px;transform:scaleX(0.9953);transform-origin:0 0;">Content Studio 1.5...</div>
<div class="t" style="left:907.29px;top:514px;transform:scaleX(1.0089);transform-origin:0 0;">2/7/2020</div>
<svg style="position:absolute;left:7px;top:533px" width="15" height="13" viewBox="0 0 15 13"><path d="M0.4 4.6C0.4 1.6 4 0.3 7.3 0.3C10.6 0.3 14.6 1.6 14.6 4.6C14.6 7.6 10.2 11 7.4 12.3C4.6 11 0.4 7.6 0.4 4.6Z" fill="#262626"/><ellipse cx="7.6" cy="5.2" rx="5.4" ry="2.3" fill="#fff"/><ellipse cx="8" cy="5" rx="2.6" ry="3.3" fill="#4aaab5"/><path d="M3.3 5.4A1.4 1.4 0 0 1 5.6 4.2" stroke="#4aaab5" stroke-width="0.8" fill="none"/><ellipse cx="8" cy="9.3" rx="3.8" ry="1.3" fill="#4a2c14"/><rect x="2.6" y="8.2" width="0.9" height="0.9" fill="#ddd"/><rect x="4.4" y="8.2" width="0.9" height="0.9" fill="#ddd"/></svg>
<div class="t" style="left:24.02px;top:533px;transform:scaleX(0.9816);transform-origin:0 0;">Message 2.vmpf</div>
<div class="t" style="left:748.07px;top:533px;transform:scaleX(0.9310);transform-origin:0 0;">9,198</div>
<div class="t" style="left:787.50px;top:533px;transform:scaleX(0.9953);transform-origin:0 0;">Content Studio 1.5...</div>
<div class="t" style="left:907.29px;top:533px;transform:scaleX(1.0089);transform-origin:0 0;">2/7/2020</div>
<div class="t" style="left:971.51px;top:473px;transform:scaleX(0.9896);transform-origin:0 0;">Filename</div>
<svg style="position:absolute;left:1080px;top:467px" width="10" height="6" viewBox="0 0 10 6"><path d="M1 5L4.8 1.2L8.6 5" fill="none" stroke="#6a6a6a" stroke-width="1.1"/></svg>
<div style="position:absolute;left:1201px;top:468px;width:1px;height:23px;background:#e5e5e5"></div>
<div style="position:absolute;left:1240px;top:468px;width:1px;height:23px;background:#e5e5e5"></div>
<div style="position:absolute;left:1320px;top:468px;width:1px;height:23px;background:#e5e5e5"></div>
<div style="position:absolute;left:1420px;top:468px;width:1px;height:23px;background:#e5e5e5"></div>
<div style="position:absolute;left:1500px;top:468px;width:1px;height:23px;background:#e5e5e5"></div>
<div style="position:absolute;left:1585px;top:468px;width:1px;height:23px;background:#e5e5e5"></div>
<div class="t" style="left:1207.32px;top:473px;transform:scaleX(0.9778);transform-origin:0 0;">File...</div>
<div class="t" style="left:1246.31px;top:473px;transform:scaleX(0.9878);transform-origin:0 0;">Filetype</div>
<div class="t" style="left:1326.28px;top:473px;transform:scaleX(1.0186);transform-origin:0 0;">Last modified</div>
<div class="t" style="left:1426.53px;top:473px;transform:scaleX(0.9719);transform-origin:0 0;">Permissions</div>
<div class="t" style="left:1507.50px;top:473px;transform:scaleX(0.9944);transform-origin:0 0;">Owner/Group</div>
<svg style="position:absolute;left:972px;top:493px" width="13" height="16" viewBox="0 0 13 16"><defs><linearGradient id="fg" x1="0" y1="0" x2="1" y2="1"><stop offset="0" stop-color="#ffeba8"/><stop offset="1" stop-color="#fde08a"/></linearGradient></defs><path d="M0.5 0.5H11.5V9.5H12.5V15.5H0.5Z" fill="url(#fg)" stroke="#e9c24f"/><path d="M10.5 9.8V15.5" stroke="#e9c24f"/></svg>
<div style="position:absolute;left:986px;top:492px;width:600px;height:19px;border:1px dotted #000"></div>
<div class="t " style="left:988px;top:495px;">..</div>
<svg style="position:absolute;left:970px;top:514px" width="15" height="13" viewBox="0 0 15 13"><path d="M0.4 4.6C0.4 1.6 4 0.3 7.3 0.3C10.6 0.3 14.6 1.6 14.6 4.6C14.6 7.6 10.2 11 7.4 12.3C4.6 11 0.4 7.6 0.4 4.6Z" fill="#262626"/><ellipse cx="7.6" cy="5.2" rx="5.4" ry="2.3" fill="#fff"/><ellipse cx="8" cy="5" rx="2.6" ry="3.3" fill="#4aaab5"/><path d="M3.3 5.4A1.4 1.4 0 0 1 5.6 4.2" stroke="#4aaab5" stroke-width="0.8" fill="none"/><ellipse cx="8" cy="9.3" rx="3.8" ry="1.3" fill="#4a2c14"/><rect x="2.6" y="8.2" width="0.9" height="0.9" fill="#ddd"/><rect x="4.4" y="8.2" width="0.9" height="0.9" fill="#ddd"/></svg>
<div class="t" style="left:987.32px;top:514px;transform:scaleX(0.9816);transform-origin:0 0;">Message 1.vmpf</div>
<div class="t" style="left:1207.08px;top:514px;transform:scaleX(0.9207);transform-origin:0 0;">9,198</div>
<div class="t" style="left:1246.31px;top:514px;transform:scaleX(0.9938);transform-origin:0 0;">Content St...</div>
<div class="t" style="left:1326.34px;top:514px;transform:scaleX(0.9593);transform-origin:0 0;">2/7/2020 1:06:3...</div>
<div class="t" style="left:1427.50px;top:514px;transform:scaleX(1.1000);transform-origin:0 0;">-rw-rw-r--</div>
<svg style="position:absolute;left:970px;top:533px" width="15" height="13" viewBox="0 0 15 13"><path d="M0.4 4.6C0.4 1.6 4 0.3 7.3 0.3C10.6 0.3 14.6 1.6 14.6 4.6C14.6 7.6 10.2 11 7.4 12.3C4.6 11 0.4 7.6 0.4 4.6Z" fill="#262626"/><ellipse cx="7.6" cy="5.2" rx="5.4" ry="2.3" fill="#fff"/><ellipse cx="8" cy="5" rx="2.6" ry="3.3" fill="#4aaab5"/><path d="M3.3 5.4A1.4 1.4 0 0 1 5.6 4.2" stroke="#4aaab5" stroke-width="0.8" fill="none"/><ellipse cx="8" cy="9.3" rx="3.8" ry="1.3" fill="#4a2c14"/><rect x="2.6" y="8.2" width="0.9" height="0.9" fill="#ddd"/><rect x="4.4" y="8.2" width="0.9" height="0.9" fill="#ddd"/></svg>
<div class="t" style="left:987.32px;top:533px;transform:scaleX(0.9816);transform-origin:0 0;">Message 2.vmpf</div>
<div class="t" style="left:1207.08px;top:533px;transform:scaleX(0.9207);transform-origin:0 0;">9,198</div>
<div class="t" style="left:1246.31px;top:533px;transform:scaleX(0.9938);transform-origin:0 0;">Content St...</div>
<div class="t" style="left:1326.34px;top:533px;transform:scaleX(0.9593);transform-origin:0 0;">2/7/2020 1:06:4...</div>
<div class="t" style="left:1427.50px;top:533px;transform:scaleX(1.1000);transform-origin:0 0;">-rw-rw-r--</div>
<div style="position:absolute;left:3px;top:840px;width:955px;height:16px;background:#f0f0f0"></div>
<div style="position:absolute;left:20px;top:840px;width:863px;height:16px;background:#cdcdcd"></div>
<svg style="position:absolute;left:6px;top:843px" width="7" height="9" viewBox="0 0 7 9"><path d="M5.2 0.9L1.5 4.5L5.2 8.1" fill="none" stroke="#606060" stroke-width="2"/></svg>
<svg style="position:absolute;left:946px;top:843px" width="7" height="9" viewBox="0 0 7 9"><path d="M0.9 0.9L4.6 4.5L0.9 8.1" fill="none" stroke="#606060" stroke-width="2"/></svg>
<div style="position:absolute;left:3px;top:856px;width:955px;height:1px;background:#e3e3e3"></div>
<div class="t" style="left:4.05px;top:862px;transform:scaleX(0.9491);transform-origin:0 0;">2 files. Total size: 18,396 bytes</div>
<div style="position:absolute;left:965px;top:857px;width:953px;height:1px;background:#e3e3e3"></div>
<div style="position:absolute;left:965px;top:858px;width:953px;height:22px;background:#f0f0f0"></div>
<div class="t" style="left:967.05px;top:862px;transform:scaleX(0.9491);transform-origin:0 0;">2 files. Total size: 18,396 bytes</div>
<div style="position:absolute;left:956px;top:858px;width:1px;height:21px;background:#e3e3e3"></div>
<div style="position:absolute;left:1916px;top:858px;width:1px;height:21px;background:#e3e3e3"></div>
<div style="position:absolute;left:0px;top:879px;width:1920px;height:1px;background:#e3e3e3"></div>
<div style="position:absolute;left:0px;top:881px;width:1920px;height:1px;background:#a0a0a0"></div>
<div style="position:absolute;left:0px;top:886px;width:1920px;height:1px;background:#6d7280"></div>
<div style="position:absolute;left:0px;top:887px;width:1920px;height:62px;background:#fff"></div>
<div style="position:absolute;left:0px;top:887px;width:1px;height:62px;background:#6d7280"></div>
<div style="position:absolute;left:181px;top:888px;width:1px;height:24px;background:#e5e5e5"></div>
<div style="position:absolute;left:241px;top:888px;width:1px;height:24px;background:#e5e5e5"></div>
<div style="position:absolute;left:421px;top:888px;width:1px;height:24px;background:#e5e5e5"></div>
<div style="position:absolute;left:501px;top:888px;width:1px;height:24px;background:#e5e5e5"></div>
<div style="position:absolute;left:561px;top:888px;width:1px;height:24px;background:#e5e5e5"></div>
<div style="position:absolute;left:711px;top:888px;width:1px;height:24px;background:#e5e5e5"></div>
<div class="t" style="left:7.01px;top:893px;transform:scaleX(0.9882);transform-origin:0 0;">Server/Local file</div>
<div class="t" style="left:187.17px;top:893px;transform:scaleX(1.0304);transform-origin:0 0;">Direction</div>
<div class="t" style="left:247.49px;top:893px;transform:scaleX(1.0051);transform-origin:0 0;">Remote file</div>
<div class="t" style="left:475.19px;top:893px;transform:scaleX(0.9091);transform-origin:0 0;">Size</div>
<div class="t" style="left:507.36px;top:893px;transform:scaleX(1.0417);transform-origin:0 0;">Priority</div>
<div class="t" style="left:567.04px;top:893px;transform:scaleX(0.9636);transform-origin:0 0;">Status</div>
<svg style="position:absolute;left:10px;top:913px" width="9" height="16" viewBox="0 0 9 16"><rect x="1" y="0" width="7.5" height="12" rx="1" fill="#4e4e4e"/><rect x="2" y="2" width="5.5" height="2" fill="#3fc93f"/><circle cx="4.7" cy="9.5" r="0.8" fill="#ddd"/><path d="M4.7 12V14.5" stroke="#666" stroke-width="1"/><path d="M0.5 14.6H9" stroke="#777" stroke-width="1"/><circle cx="4.7" cy="14.6" r="0.9" fill="#2a7fe0"/></svg>
<div class="t" style="left:24.00px;top:915px;transform:scaleX(1.1207);transform-origin:0 0;">sftp://</div>
<svg style="position:absolute;left:8px;top:932px" width="13" height="17" viewBox="0 0 13 17"><path d="M0.5 0.5H8.5L12.5 4.5V15.5H0.5Z" fill="#fff" stroke="#e0e0e0"/></svg>
<div class="t" style="left:29.49px;top:934px;transform:scaleX(1.0102);transform-origin:0 0;">C:\Users\cholmlu\Desktop...</div>
<div class="t " style="left:203px;top:934px;">--&gt;</div>
<div class="t" style="left:248.50px;top:934px;transform:scaleX(1.0195);transform-origin:0 0;">/usr/share/Daktronics/Conten...</div>
<div class="t" style="left:468.17px;top:934px;transform:scaleX(0.9310);transform-origin:0 0;">9,198</div>
<div class="t" style="left:507.34px;top:934px;transform:scaleX(1.0649);transform-origin:0 0;">Normal</div>
<div style="position:absolute;left:1919px;top:887px;width:1px;height:62px;background:#6d7280"></div>
<svg style="position:absolute;left:5px;top:45px" width="22" height="21" viewBox="0 0 22 21"><rect x="1" y="1" width="6" height="12" fill="#fff"/><rect x="5" y="1" width="2" height="12" fill="#e4e4e4"/><rect x="2" y="2" width="4" height="3" fill="#5a9be0"/><rect x="2" y="2" width="4" height="1" fill="#a8cdf0"/><rect x="8" y="3" width="6" height="12" fill="#fff"/><rect x="12" y="3" width="2" height="12" fill="#e4e4e4"/><rect x="9" y="4" width="4" height="3" fill="#4a8fd8"/><rect x="14.5" y="1" width="6" height="12" fill="#fff"/><rect x="18.5" y="1" width="2" height="12" fill="#e4e4e4"/><rect x="15.5" y="2" width="4" height="3" fill="#5a9be0"/><rect x="15.5" y="2" width="4" height="1" fill="#a8cdf0"/><path d="M0.5 12.5H21" stroke="#9a9a9a" stroke-width="0.8"/><path d="M7 13.7H15" stroke="#9a9a9a" stroke-width="0.8"/><rect x="3.5" y="11.5" width="2" height="2" fill="#2bc02b"/><rect x="10" y="12.8" width="2" height="2" fill="#2bc02b"/><rect x="16.5" y="11.5" width="2" height="2" fill="#2bc02b"/><path d="M4.5 16V19M10.9 16V19M17.5 16V19" stroke="#555" stroke-width="1.5"/><path d="M1 19.5H21" stroke="#555" stroke-width="1.6"/></svg>
<svg style="position:absolute;left:32px;top:53px" width="9" height="6" viewBox="0 0 9 6"><path d="M0.5 0.8H8.5L4.5 5Z" fill="#111"/></svg>
<div style="position:absolute;left:46px;top:45px;width:1px;height:22px;background:#6d6d6d"></div>
<div style="position:absolute;left:52px;top:43px;width:108px;height:25px;background:#c2dcf3;border:1px solid #90c8f6"></div>
<div style="position:absolute;left:79px;top:43px;width:1px;height:25px;background:#90c8f6"></div>
<div style="position:absolute;left:106px;top:43px;width:1px;height:25px;background:#90c8f6"></div>
<div style="position:absolute;left:133px;top:43px;width:1px;height:25px;background:#90c8f6"></div>
<svg style="position:absolute;left:58px;top:46px" width="18" height="20" viewBox="0 0 18 20"><path d="M1.5 0.5H12.5L16.5 4.5V18.5H1.5Z" fill="#e7e7e7" stroke="#dadada"/><path d="M12.5 0.5V4.5H16.5" fill="#fff"/><path d="M3.5 3.5H9.5" stroke="#555" stroke-width="1"/><path d="M3.5 6H7" stroke="#5a94d8" stroke-width="1.3"/><path d="M8.5 6H11.5" stroke="#55d055" stroke-width="1.3"/><path d="M3.5 8.5H8.5" stroke="#1e78d6" stroke-width="1.2"/><path d="M9.5 8.5H13" stroke="#555" stroke-width="1.1"/><path d="M3.5 11H6" stroke="#55d055" stroke-width="1.3"/><path d="M7 11H12" stroke="#888" stroke-width="1.3"/><path d="M3.5 13.5H12" stroke="#1e78d6" stroke-width="1.2"/><path d="M3.5 16H9.5" stroke="#888" stroke-width="1.3"/><path d="M11 16H13.5" stroke="#55d055" stroke-width="1.3"/></svg>
<svg style="position:absolute;left:82px;top:47px" width="21" height="18" viewBox="0 0 21 18"><rect x="1" y="0.5" width="19" height="16.5" rx="1" fill="#e6e6e6"/><rect x="1" y="0.5" width="19" height="2.7" rx="1" fill="#5a5a5a"/><rect x="1" y="3.2" width="9.3" height="3.8" fill="#2ecc2e"/><rect x="1" y="7" width="9.3" height="1" fill="#fff"/><rect x="1" y="8" width="9.3" height="9" fill="#cde5c8"/><rect x="10.3" y="3.2" width="1" height="13.8" fill="#fff"/></svg>
<svg style="position:absolute;left:109px;top:47px" width="21" height="18" viewBox="0 0 21 18"><rect x="1" y="0.5" width="19" height="16.5" rx="1" fill="#e6e6e6"/><rect x="1" y="0.5" width="19" height="2.7" rx="1" fill="#5a5a5a"/><rect x="11" y="3.2" width="9" height="3.8" fill="#1d78d3"/><rect x="11" y="7" width="9" height="1" fill="#fff"/><rect x="11" y="8" width="9" height="9" fill="#c9d8e4"/><rect x="10" y="3.2" width="1" height="13.8" fill="#fff"/></svg>
<svg style="position:absolute;left:136px;top:46px" width="21" height="20" viewBox="0 0 21 20"><path d="M1 4.7H14" stroke="#2ecc2e" stroke-width="3.4"/><path d="M7.5 0.6L12.5 4.7L7.5 8.8ZM13 0.6L20.2 4.7L13 8.8Z" fill="#2ecc2e"/><path d="M7 14.9H20" stroke="#1e78d6" stroke-width="3.4"/><path d="M1 14.9L8 10.9V18.9ZM6.5 14.9L12.5 10.9V18.9Z" fill="#1e78d6"/></svg>
<div style="position:absolute;left:162px;top:45px;width:1px;height:22px;background:#6d6d6d"></div>
<svg style="position:absolute;left:170px;top:45px" width="21" height="21" viewBox="0 0 21 21"><path d="M2.6 10A7.9 7.9 0 0 1 16.5 5.2" fill="none" stroke="#1e78d6" stroke-width="3.6"/><path d="M13 10H20V2.5Z" fill="#1e78d6"/><path d="M18.4 11A7.9 7.9 0 0 1 4.5 15.8" fill="none" stroke="#2ecc2e" stroke-width="3.6"/><path d="M8 11H1V18.5Z" fill="#2ecc2e"/></svg>
<svg style="position:absolute;left:197px;top:45px" width="21" height="21" viewBox="0 0 21 21"><path d="M4.5 20V3" stroke="#2ecc2e" stroke-width="3"/><path d="M1.5 5.5L4.5 1L7.5 5.5Z" fill="#2ecc2e"/><path d="M9.5 1V17" stroke="#1e78d6" stroke-width="3"/><path d="M6.5 16L9.5 20L12.5 16Z" fill="#1e78d6"/><g fill="#4d4d4d"><circle cx="15.7" cy="8" r="3.1"/><circle cx="15.7" cy="8" r="3.6" fill="none" stroke="#4d4d4d" stroke-width="2" stroke-dasharray="1.5 1.33"/><circle cx="17.4" cy="15.6" r="2.2"/><circle cx="17.4" cy="15.6" r="2.6" fill="none" stroke="#4d4d4d" stroke-width="1.6" stroke-dasharray="1.2 1.0"/></g><circle cx="15.7" cy="8" r="1.1" fill="#f0f0f0"/><circle cx="17.4" cy="15.6" r="0.8" fill="#f0f0f0"/></svg>
<svg style="position:absolute;left:224px;top:45px" width="21" height="21" viewBox="0 0 21 21"><circle cx="10.5" cy="10.3" r="9.4" fill="#3d3d3d"/><path d="M7 6.8L14 13.8M14 6.8L7 13.8" stroke="#fff" stroke-width="2.6"/></svg>
<svg style="position:absolute;left:251px;top:45px" width="21" height="21" viewBox="0 0 21 21"><rect x="1" y="1" width="7.5" height="19" fill="#fff"/><rect x="8" y="1" width="6.5" height="19" fill="#e6e6e6"/><path d="M4 4.5H11.5" stroke="#1e78d6" stroke-width="1"/><path d="M4 7H11.5" stroke="#4a90d9" stroke-width="1.5"/><rect x="7" y="16.5" width="1.3" height="1.3" fill="#222"/><path d="M12.8 12.8L19.2 19.2M19.2 12.8L12.8 19.2" stroke="#c0151a" stroke-width="2.5"/></svg>
<svg style="position:absolute;left:278px;top:45px" width="21" height="21" viewBox="0 0 21 21"><rect x="1" y="1" width="7.5" height="19" fill="#fff"/><rect x="8" y="1" width="6.5" height="19" fill="#e6e6e6"/><path d="M4 4.5H11.5" stroke="#555" stroke-width="1"/><path d="M4 7H11.5" stroke="#888" stroke-width="1.5"/><rect x="7" y="16.5" width="1.3" height="1.3" fill="#222"/><path d="M11 15L14 18.5L19.5 12.5" fill="none" stroke="#7a7a7a" stroke-width="2.3"/></svg>
<div style="position:absolute;left:305px;top:45px;width:1px;height:22px;background:#6d6d6d"></div>
<svg style="position:absolute;left:313px;top:47px" width="21" height="17" viewBox="0 0 21 17"><rect x="1" y="2" width="19" height="14" fill="#fff"/><rect x="1" y="2" width="19" height="2.5" rx="1" fill="#555"/><path d="M10.6 4V15.5" stroke="#555" stroke-width="1.2"/><path d="M3 6.3H19" stroke="#1e78d6" stroke-width="1.1"/><path d="M3 8.8H10" stroke="#d04040" stroke-width="1.1"/><path d="M3 11.3H19" stroke="#2ecc2e" stroke-width="1.1"/><path d="M3 13.8H10" stroke="#f5c02a" stroke-width="1.1"/></svg>
<svg style="position:absolute;left:340px;top:45px" width="21" height="21" viewBox="0 0 21 21"><rect x="11" y="1" width="8.5" height="9" fill="#fff"/><path d="M13 3.5H15.5" stroke="#c01818" stroke-width="1"/><path d="M13 5.8H18" stroke="#f5c02a" stroke-width="1"/><path d="M14 8H17" stroke="#2ecc2e" stroke-width="1"/><rect x="1" y="11" width="8.5" height="9" fill="#fff"/><path d="M2 13H5" stroke="#f5c02a" stroke-width="1"/><path d="M2 15.3H6" stroke="#2ecc2e" stroke-width="1.2"/><path d="M2 17.5H5" stroke="#c01818" stroke-width="1"/><circle cx="10.8" cy="10.7" r="5.1" fill="#e4e4e4" stroke="#555" stroke-width="1.2"/><path d="M14.5 14.5L19 19" stroke="#444" stroke-width="2"/></svg>
<svg style="position:absolute;left:367px;top:45px" width="21" height="21" viewBox="0 0 21 21"><rect x="11" y="1" width="9" height="9" fill="#fff"/><rect x="1" y="11" width="9" height="9" fill="#fff"/><circle cx="11" cy="10.8" r="3" fill="#ddd"/><path d="M6.2 10.3A4.8 4.8 0 0 1 14.5 7" fill="none" stroke="#2ecc2e" stroke-width="2.4"/><path d="M12.5 10.3H16.7V5.5Z" fill="#2ecc2e"/><path d="M15.8 11.3A4.8 4.8 0 0 1 7.5 14.6" fill="none" stroke="#f5b800" stroke-width="2.4"/><path d="M9.5 11.3H5.3V16.1Z" fill="#f5b800"/></svg>
<svg style="position:absolute;left:394px;top:45px" width="21" height="21" viewBox="0 0 21 21"><path d="M4.8 3.2Q5.2 2 7 2Q8.8 2 9.2 3.2L10.4 13.5H1.2Z" fill="#5e5e5e"/><path d="M11.8 3.2Q12.2 2 14 2Q15.8 2 16.2 3.2L19.8 13.5H10.6Z" fill="#5e5e5e"/><rect x="8.5" y="7" width="4" height="8" fill="#5e5e5e"/><rect x="10" y="10.5" width="1" height="1.5" fill="#bbb"/><circle cx="5.9" cy="14.6" r="4.3" fill="#505050"/><circle cx="15.9" cy="14.6" r="4.3" fill="#505050"/><circle cx="5.9" cy="14.6" r="3.3" fill="#f5b800"/><circle cx="15.9" cy="14.6" r="3.3" fill="#f5b800"/><path d="M4.2 14.2A1.9 1.9 0 0 1 6 12.4" stroke="#fff" stroke-width="0.9" fill="none"/><path d="M14.2 14.2A1.9 1.9 0 0 1 16 12.4" stroke="#fff" stroke-width="0.9" fill="none"/></svg>
<div style="position:absolute;left:0px;top:236px;width:2px;height:646px;background:#a0a0a0"></div>
<div style="position:absolute;left:2px;top:237px;width:1px;height:643px;background:#696969"></div>
<div style="position:absolute;left:964px;top:237px;width:2px;height:643px;background:#6a6a6a"></div>
<div style="position:absolute;left:1919px;top:236px;width:1px;height:646px;background:#a0a0a0"></div></body></html>
